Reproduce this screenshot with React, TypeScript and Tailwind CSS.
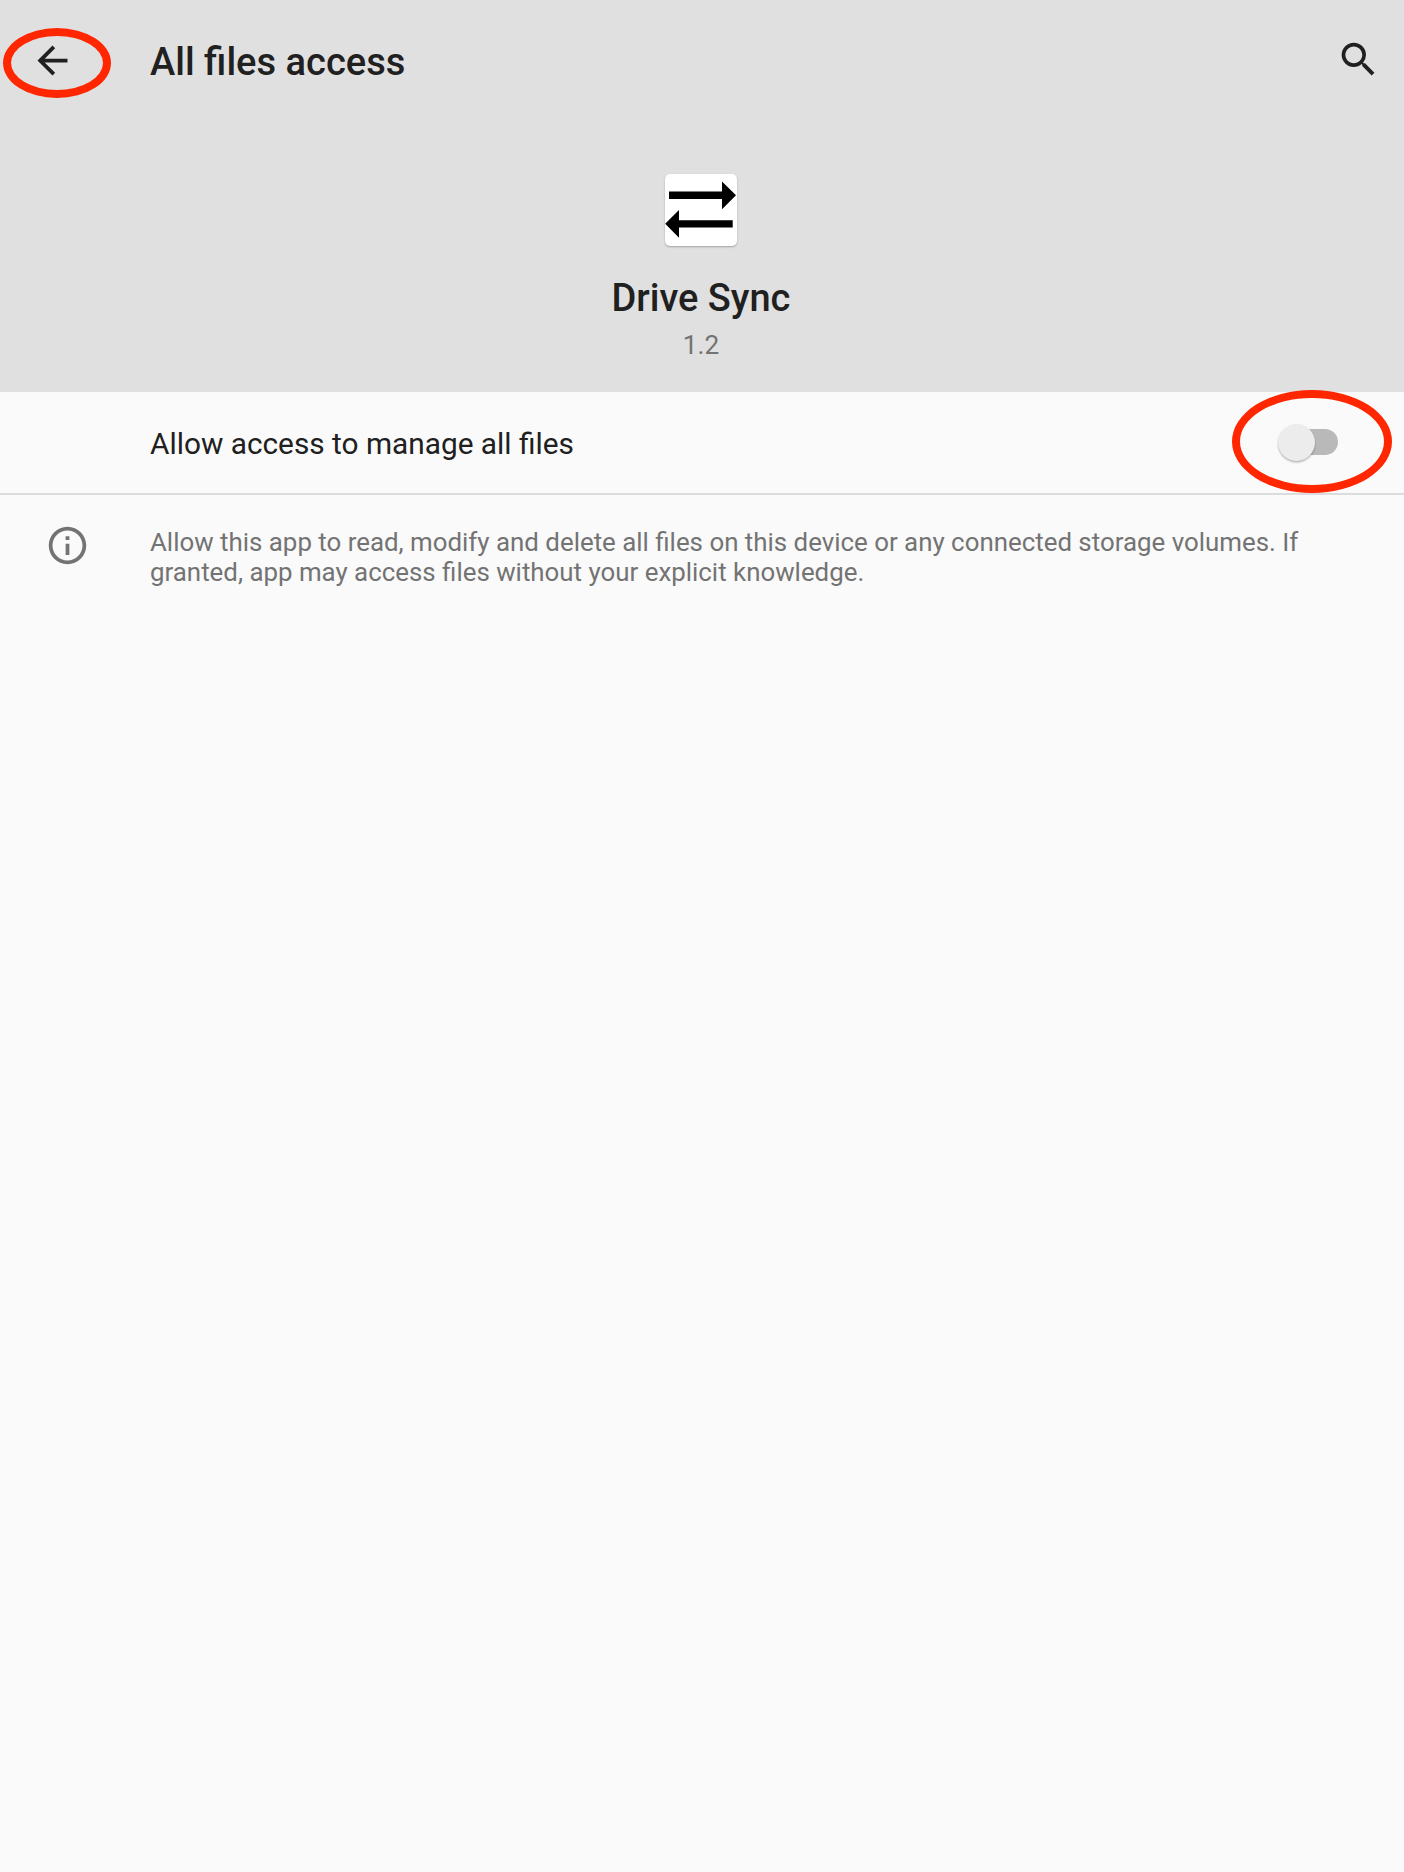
function BackIcon() {
  return (
    <svg viewBox="0 0 24 24" className="size-[45px] fill-[#202020]">
      <path d="M20 11H7.83l5.59-5.59L12 4l-8 8 8 8 1.41-1.41L7.83 13H20v-2z" />
    </svg>
  );
}

function SearchIcon() {
  return (
    <svg viewBox="0 0 24 24" className="size-[45px] fill-[#202020]">
      <path d="M15.5 14h-.79l-.28-.27A6.471 6.471 0 0 0 16 9.5 6.5 6.5 0 1 0 9.5 16c1.61 0 3.09-.59 4.23-1.57l.27.28v.79l5 4.99L20.49 19l-4.99-5zm-6 0C7.01 14 5 11.99 5 9.5S7.01 5 9.5 5 14 7.01 14 9.5 11.99 14 9.5 14z" />
    </svg>
  );
}

function InfoIcon() {
  return (
    <svg viewBox="0 0 24 24" className="size-[45px] fill-[#737373]">
      <path d="M11 7h2v2h-2zm0 4h2v6h-2zm1-9C6.48 2 2 6.48 2 12s4.48 10 10 10 10-4.48 10-10S17.52 2 12 2zm0 18c-4.41 0-8-3.59-8-8s3.59-8 8-8 8 3.59 8 8-3.59 8-8 8z" />
    </svg>
  );
}

function AppIcon() {
  return (
    <div className="size-[72px] rounded-[5px] bg-white shadow-[0_1px_2px_rgba(0,0,0,0.28)]">
      <svg viewBox="0 0 72 72" className="size-[72px] fill-black">
        <path d="M4 17.5h53V7.5L71 21.3 57 35.2V25H4z" />
        <path d="M67.7 46.2H14V36L.2 49.8 14 63.7V53.5H67.7z" />
      </svg>
    </div>
  );
}

function Switch() {
  return (
    <button role="switch" aria-checked="false" className="relative flex h-[38px] w-[61px] items-center justify-end">
      <span className="h-[26px] w-[52px] rounded-full bg-[#b9b9b9]" />
      <span className="absolute top-[0.5px] left-[0.5px] size-[37.5px] rounded-full bg-[#ececec] shadow-[0_1.5px_2px_rgba(0,0,0,0.28)]" />
    </button>
  );
}

export default function App() {
  return (
    <div className="min-h-[1872px] w-[1404px] bg-[#fafafa] font-['Roboto',sans-serif] text-[#202020]">
      <header className="h-[392px] bg-[#e0e0e0]">
        <div className="flex h-[120px] items-start pr-[23px] pl-[30px] pt-[37px]">
          <button className="relative mt-px size-[45px]">
            <BackIcon />
            <span className="pointer-events-none absolute -top-[10px] -left-[27px] h-[70px] w-[108px] rounded-[50%] border-8 border-[#ff2600]" />
          </button>
          <h1 className="ml-[75px] flex-1 text-[38.1px] leading-[50px] font-medium">All files access</h1>
          <button className="size-[45px]">
            <SearchIcon />
          </button>
        </div>
        <div className="flex flex-col items-center pt-[54px] pr-[2px]">
          <AppIcon />
          <h2 className="mt-[27px] text-[38px] leading-[50px] font-medium">Drive Sync</h2>
          <p className="mt-[7px] text-[26.25px] leading-[30px] text-[#737373]">1.2</p>
        </div>
      </header>
      <main>
        <div className="flex h-[103px] items-start border-b-2 border-[#dcdcdc] pr-[66px] pl-[150px]">
          <span className="mt-[32px] flex-1 text-[29.8px] leading-[40px]">Allow access to manage all files</span>
          <div className="relative mt-[31px]">
            <Switch />
            <span className="pointer-events-none absolute -top-[33px] -left-[45px] h-[103px] w-[160px] rounded-[50%] border-8 border-[#ff2600]" />
          </div>
        </div>
        <div className="flex items-start pt-[28px] pl-[45px]">
          <InfoIcon />
          <p className="mt-[4px] ml-[60px] w-[1165px] text-[25.87px] leading-[30px] text-[#737373]">
            Allow this app to read, modify and delete all files on this device or any connected storage volumes. If granted, app may access files without your explicit knowledge.
          </p>
        </div>
      </main>
    </div>
  );
}
